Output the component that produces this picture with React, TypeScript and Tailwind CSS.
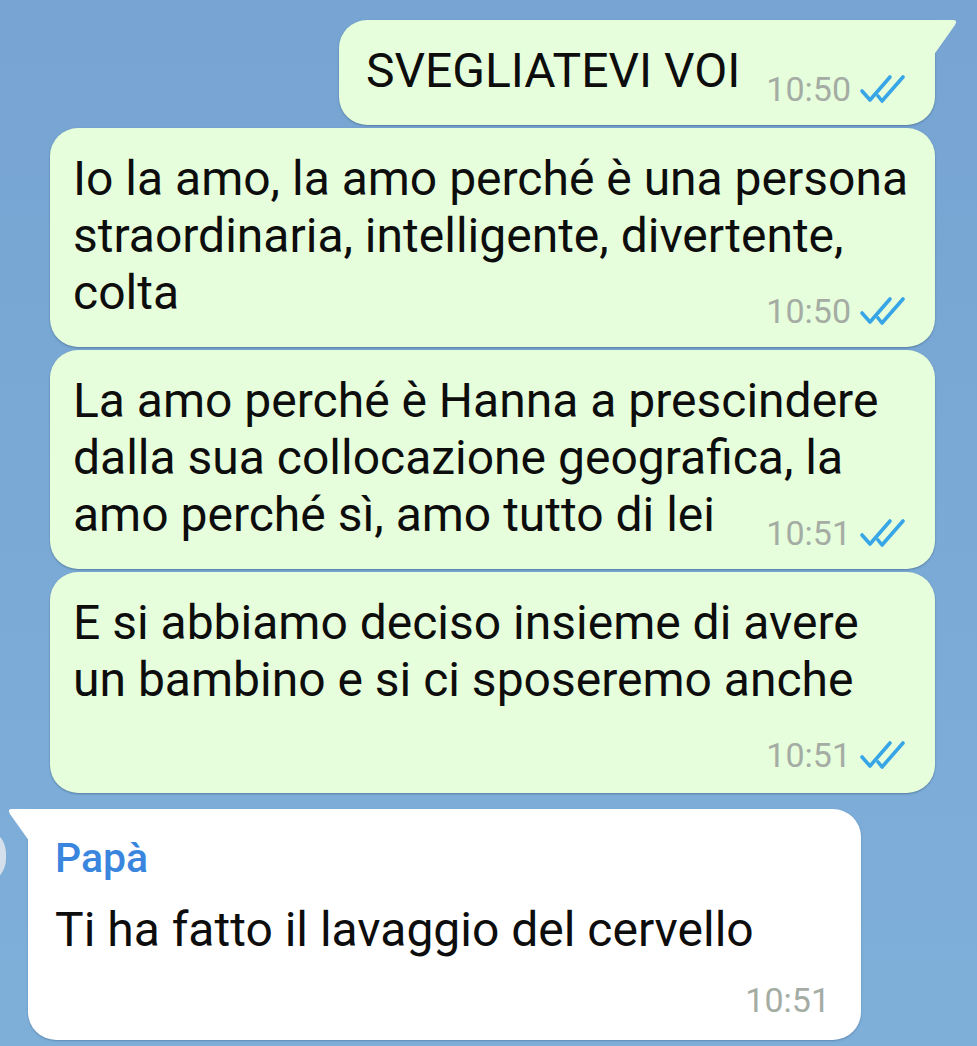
import React from "react";

const font = { fontFamily: "Roboto, 'Noto Sans', Arial, sans-serif" };

function Checks() {
  return (
    <svg width="46" height="32" viewBox="0 0 46 32" className="ml-[8px] shrink-0">
      <path d="M3 18 L11 27 L31 4" fill="none" stroke="#38a6e6" strokeWidth="3.6" strokeLinecap="round" strokeLinejoin="round" />
      <path d="M19 23 L23 28 L44 4" fill="none" stroke="#38a6e6" strokeWidth="3.6" strokeLinecap="round" strokeLinejoin="round" />
    </svg>
  );
}

function Time({ t, read = true }: { t: string; read?: boolean }) {
  return (
    <div className="flex items-center shrink-0 mb-[-8px] ml-[26px] h-[36px]">
      <span className="text-[34px] leading-[36px] text-[#a4aca4]">{t}</span>
      {read && <Checks />}
    </div>
  );
}

function Line({ children }: { children: React.ReactNode }) {
  return <div className="whitespace-nowrap text-[48px] leading-[57px] text-[#0d0d0d]">{children}</div>;
}

function Out({
  lines,
  time,
  extra = false,
  first = false,
  wide = true,
}: {
  lines: string[];
  time: string;
  extra?: boolean;
  first?: boolean;
  wide?: boolean;
}) {
  const last = extra ? "\u00a0" : lines[lines.length - 1];
  const rest = extra ? lines : lines.slice(0, -1);
  return (
    <div
      className={`relative bg-[#e6fedb] rounded-[28px] shadow-[0_1px_2px_rgba(40,70,100,0.45)] pr-[30px] pt-[22px] ${
        extra ? "pb-[28px]" : "pb-[26px]"
      } ${first ? "rounded-tr-none pl-[27px]" : "pl-[23px]"} ${wide ? "w-[885px]" : ""}`}
    >
      {first && (
        <svg
          width="26"
          height="40"
          viewBox="0 0 26 40"
          className="absolute top-0 right-[-24px]"
        >
          <path d="M0 0 L20 0 Q25 0 22 5 L0 36 Z" fill="#e6fedb" />
        </svg>
      )}
      {rest.map((l, i) => (
        <Line key={i}>{l}</Line>
      ))}
      <div className="flex items-end justify-between">
        <Line>{last}</Line>
        <Time t={time} />
      </div>
    </div>
  );
}

export default function App() {
  return (
    <div
      style={font}
      className="w-[977px] h-[1046px] overflow-hidden bg-gradient-to-b from-[#77a4d2] to-[#7eafd9] relative"
    >
      <div className="absolute left-[-44px] top-[828px] w-[50px] h-[56px] rounded-full bg-[#d3e0ec]" />
      <div className="flex flex-col items-end pr-[42px] pt-[20px] gap-[3px]">
        <Out first wide={false} lines={["SVEGLIATEVI VOI"]} time="10:50" />
        <Out
          lines={[
            "Io la amo, la amo perché è una persona",
            "straordinaria, intelligente, divertente,",
            "colta",
          ]}
          time="10:50"
        />
        <Out
          lines={[
            "La amo perché è Hanna a prescindere",
            "dalla sua collocazione geografica, la",
            "amo perché sì, amo tutto di lei",
          ]}
          time="10:51"
        />
        <Out
          extra
          lines={["E si abbiamo deciso insieme di avere", "un bambino e si ci sposeremo anche"]}
          time="10:51"
        />
      </div>
      <div className="pl-[28px] pt-[16px]">
        <div className="relative w-[833px] bg-white rounded-[28px] rounded-tl-none shadow-[0_1px_2px_rgba(40,70,100,0.35)] pl-[27px] pr-[31px] pt-[24px] pb-[22px]">
          <svg width="26" height="40" viewBox="0 0 26 40" className="absolute top-0 left-[-22px]">
            <path d="M26 0 L6 0 Q1 0 4 5 L26 36 Z" fill="#ffffff" />
          </svg>
          <div className="text-[41px] leading-[50px] font-medium text-[#3a86de]">Papà</div>
          <div className="mt-[18px] whitespace-nowrap text-[48px] leading-[57px] text-[#0d0d0d]">
            Ti ha fatto il lavaggio del cervello
          </div>
          <div className="flex justify-end mt-[24px]">
            <span className="text-[34px] leading-[36px] text-[#a4aca4]">10:51</span>
          </div>
        </div>
      </div>
    </div>
  );
}
